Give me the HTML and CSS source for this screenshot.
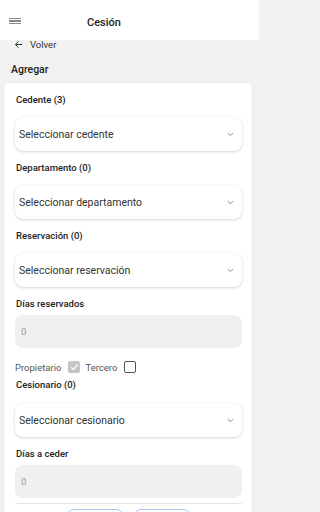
FILE: index.html
```html
<!DOCTYPE html>
<html lang="es">
<head>
<meta charset="utf-8">
<title>Cesión</title>
<link rel="stylesheet" href="styles.css">
</head>
<body>
<header class="topbar">
  <span class="burger"><i></i><i></i><i></i></span>
  <span class="title">Cesión</span>
</header>
<main class="page">
  <div class="back">
    <svg width="9" height="9" viewBox="0 0 10 10"><path d="M9 5H1.5M5 1.5L1.5 5L5 8.5" fill="none" stroke="#333" stroke-width="1.1"/></svg>
    <span>Volver</span>
  </div>
  <h2 class="section">Agregar</h2>
  <section class="card">
    <label class="lbl">Cedente (3)</label>
    <div class="select"><span>Seleccionar cedente</span><svg class="chev" width="7" height="5" viewBox="0 0 7 5"><path d="M0.8 1L3.5 3.7L6.2 1" fill="none" stroke="#888" stroke-width="1"/></svg></div>
    <label class="lbl">Departamento (0)</label>
    <div class="select"><span>Seleccionar departamento</span><svg class="chev" width="7" height="5" viewBox="0 0 7 5"><path d="M0.8 1L3.5 3.7L6.2 1" fill="none" stroke="#888" stroke-width="1"/></svg></div>
    <label class="lbl">Reservación (0)</label>
    <div class="select"><span>Seleccionar reservación</span><svg class="chev" width="7" height="5" viewBox="0 0 7 5"><path d="M0.8 1L3.5 3.7L6.2 1" fill="none" stroke="#888" stroke-width="1"/></svg></div>
    <label class="lbl lbl-tight">Días reservados</label>
    <div class="input">0</div>
    <div class="checks">
      <span>Propietario</span>
      <span class="cb cb-on"><svg width="9" height="8" viewBox="0 0 9 8"><path d="M1 4.2L3.4 6.4L8 1.4" fill="none" stroke="#fff" stroke-width="1.3"/></svg></span>
      <span>Tercero</span>
      <span class="cb"></span>
    </div>
    <label class="lbl lbl-after">Cesionario (0)</label>
    <div class="select"><span>Seleccionar cesionario</span><svg class="chev" width="7" height="5" viewBox="0 0 7 5"><path d="M0.8 1L3.5 3.7L6.2 1" fill="none" stroke="#888" stroke-width="1"/></svg></div>
    <label class="lbl lbl-tight">Días a ceder</label>
    <div class="input">0</div>
    <hr class="divider">
    <div class="actions">
      <button class="btn" aria-label="Cancelar"></button>
      <button class="btn" aria-label="Guardar"></button>
    </div>
  </section>
</main>
</body>
</html>
```
FILE: styles.css
```css
html, body {
  margin: 0;
  padding: 0;
}
body {
  background: #f2f2f2;
  font-family: Roboto, "Liberation Sans", sans-serif;
  color: #222;
  width: 259px;
  height: 512px;
  overflow: hidden;
}
.topbar {
  height: 40px;
  background: #fff;
  display: flex;
  align-items: center;
  padding-left: 9px;
  box-sizing: border-box;
}
.burger {
  display: flex;
  flex-direction: column;
  gap: 1.5px;
  width: 12px;
  margin-top: 2px;
}
.burger i {
  display: block;
  height: 1.2px;
  background: #8a8a8a;
}
.title {
  margin-left: 66px;
  font-size: 11px;
  font-weight: 500;
  color: #222;
  margin-top: 4px;
}
.page {
  padding: 0 7px 0 4px;
}
.back {
  display: flex;
  align-items: center;
  height: 10px;
  padding-left: 10px;
  font-size: 9.5px;
  color: #333;
  margin-top: -1px;
}
.back span {
  margin-left: 7px;
}
.section {
  margin: 15px 0 0 7px;
  font-size: 10.5px;
  font-weight: 500;
  line-height: 12px;
  color: #222;
}
.card {
  margin-top: 7px;
  background: #fff;
  border-radius: 4px;
  box-shadow: 0 0 2px rgba(0,0,0,0.14);
  padding: 11px 10px 20px 11px;
  display: flex;
  flex-direction: column;
}
.lbl {
  display: block;
  font-size: 9.5px;
  font-weight: 500;
  line-height: 12px;
  color: #222;
  padding-left: 1px;
  margin-bottom: 11px;
}
.select + .lbl {
  margin-top: 11px;
}
.lbl.lbl-tight {
  margin-top: 11px;
  margin-bottom: 5px;
}
.lbl.lbl-after {
  margin-top: 5px;
  margin-bottom: 12px;
}
.select {
  height: 34px;
  background: #fff;
  border-radius: 8px;
  box-shadow: 0 1px 3px rgba(0,0,0,0.16), 0 0 1px rgba(0,0,0,0.08);
  display: flex;
  align-items: center;
  justify-content: space-between;
  padding: 0 8px 0 4px;
  font-size: 10.5px;
  color: #333;
}
.chev {
  display: block;
}
.input {
  height: 33px;
  background: #f0f0f0;
  border-radius: 8px;
  display: flex;
  align-items: center;
  padding-left: 6px;
  font-size: 9.5px;
  color: #9a9a9a;
}
.checks {
  display: flex;
  align-items: center;
  height: 14px;
  margin-top: 12px;
  font-size: 9.5px;
  color: #555;
}
.cb {
  width: 12px;
  height: 12px;
  border: 1px solid #555;
  border-radius: 2px;
  box-sizing: border-box;
  margin: 0 5px 0 7px;
  display: flex;
  align-items: center;
  justify-content: center;
}
.cb-on {
  background: #c4c4c4;
  border-color: #c4c4c4;
}
.divider {
  border: 0;
  border-top: 1px solid #e6e6e6;
  margin: 5px 0 0;
  width: 100%;
}
.actions {
  display: flex;
  justify-content: center;
  gap: 9px;
  margin-top: 5px;
}
.btn {
  width: 58px;
  height: 24px;
  border: 1px solid #a9c9ef;
  border-radius: 8px;
  background: #fff;
  padding: 0;
}
```
